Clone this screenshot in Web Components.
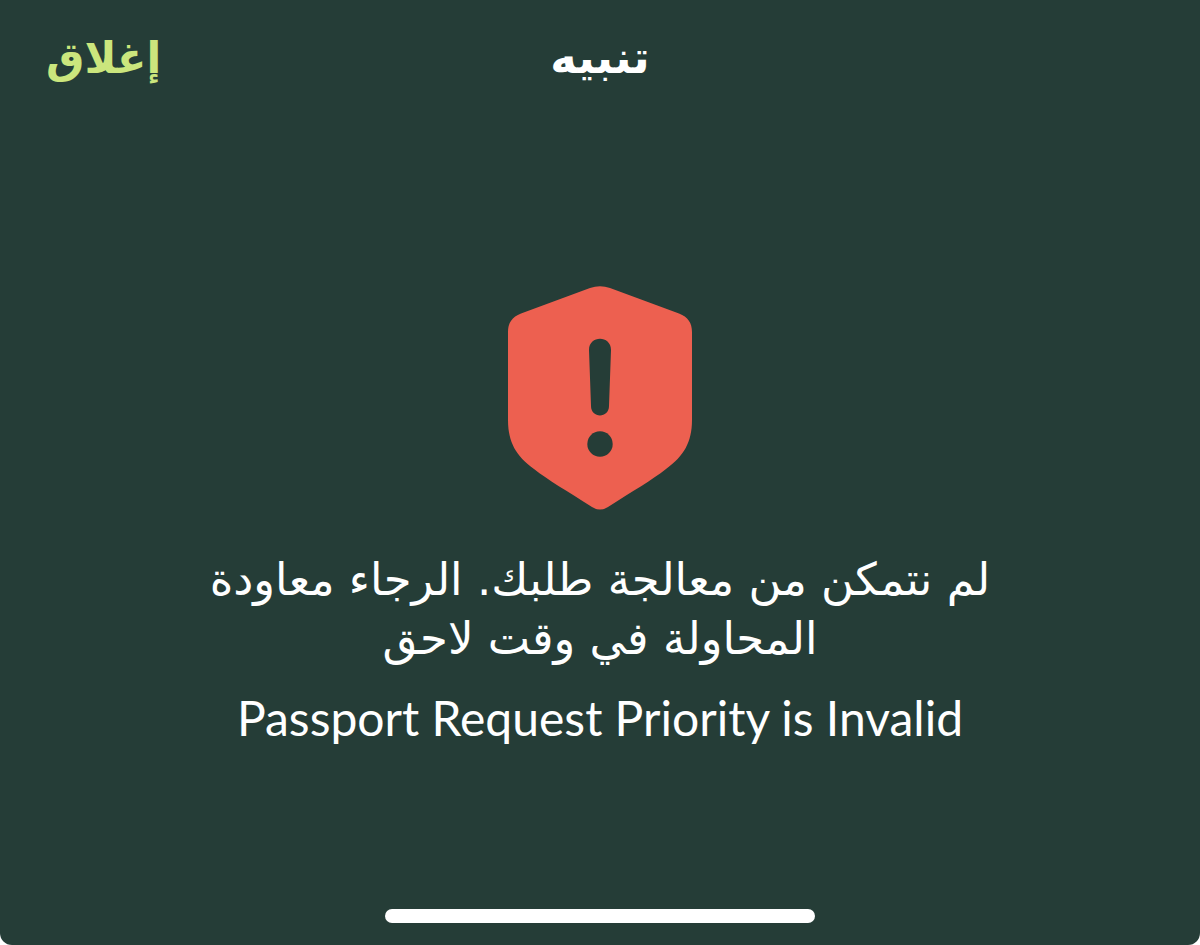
<!DOCTYPE html>
<html lang="ar" dir="rtl"><head><meta charset="utf-8"><title>تنبيه</title>
<style>html{background:#fff}body{margin:0;font-family:"DejaVu Sans",sans-serif}</style></head><body>
<alert-sheet>
<sheet-header slot="header">تنبيه</sheet-header>
<shield-icon slot="icon"></shield-icon>
<alert-message slot="message">لم نتمكن من معالجة طلبك. الرجاء معاودة المحاولة في وقت لاحق<span slot="detail" lang="en" dir="ltr">Passport Request Priority is Invalid</span></alert-message>
</alert-sheet>
<script>
const define=(name,html)=>customElements.define(name,class extends HTMLElement{
constructor(){super();const t=document.createElement('template');t.innerHTML=html;this.attachShadow({mode:'open'}).append(t.content.cloneNode(true));}});
define('alert-sheet',`<style>:host{display:flex;flex-direction:column;min-height:100vh;box-sizing:border-box;background:#253d37;color:#fff;border-radius:0 0 12px 12px;padding:20px 46px 22px}
main{flex:1;display:flex;flex-direction:column;align-items:center;padding-top:190px;gap:40px}
.home{align-self:center;width:40%;max-width:430px;height:14px;border-radius:8px;background:#fff}</style>
<slot name="header"></slot><main><slot name="icon"></slot><slot name="message"></slot></main><div class="home"></div>`);
define('sheet-header',`<style>:host{display:grid;grid-template-columns:1fr auto 1fr;align-items:center}
h1{grid-column:2;margin:0;font-size:45px;line-height:76px;font-weight:700}
button{grid-column:3;justify-self:end;border:0;padding:0;background:none;color:#cbe67d;font:inherit;font-weight:700;font-size:43px;line-height:76px}</style>
<h1><slot></slot></h1><button type="button">إغلاق</button>`);
define('shield-icon',`<style>:host{display:block}svg{display:block;width:184px;height:224px}</style>
<svg viewBox="0 0 184 224" aria-hidden="true"><path fill="#ed6050" d="M82 2Q92-1.5 102 2L171 27.5C180 31 184 37 184 46V134C184 156 176 170 158 183C144 194 125 205 100 221Q92 226 84 221C59 205 40 194 26 183C8 170 0 156 0 134V46C0 37 4 31 13 27.500Z"/><path fill="#253d37" d="M81 64C81 49 103 49 103 64L101 120C101 132.500 83 132.500 83 120Z"/><circle cx="92" cy="158" r="12.700" fill="#253d37"/></svg>`);
define('alert-message',`<style>:host{display:block;text-align:center}p{margin:0 auto;max-width:800px;font-size:45px;line-height:59px}.d{margin-top:20px;font-family:Lato,sans-serif;font-size:48px;line-height:60px}</style>
<p><slot></slot></p><p class="d"><slot name="detail"></slot></p>`);
</script></body></html>
